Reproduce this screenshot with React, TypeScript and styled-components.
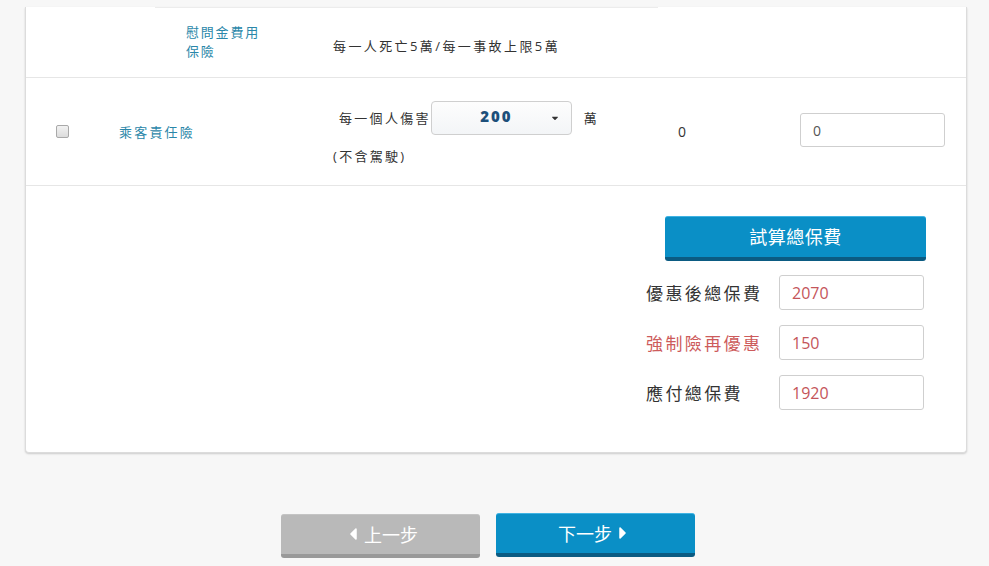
import styled, { createGlobalStyle } from "styled-components";
import { FaCaretLeft, FaCaretRight, FaCaretDown } from "react-icons/fa";

const GlobalStyle = createGlobalStyle`
  html, body {
    margin: 0;
    padding: 0;
    background: #f7f7f7;
    font-family: "Open Sans", "Noto Sans CJK TC", sans-serif;
    color: #333;
  }
`;

const Page = styled.div`
  width: 989px;
  height: 566px;
  overflow: hidden;
`;

const Card = styled.div`
  margin: 0 22px 0 25px;
  background: #fff;
  border: 1px solid #dcdcdc;
  border-top: none;
  border-radius: 0 0 4px 4px;
  box-shadow: 0 1px 2px rgba(0, 0, 0, 0.18);
`;

const SubTable = styled.div`
  margin: 7px 0 0 129px;
  width: 503px;
  border-top: 1px solid #ececec;
`;

const SubRow = styled.div`
  display: flex;
  align-items: center;
  height: 69px;
`;

const SubLabel = styled.div`
  width: 147px;
  padding-left: 31px;
  font-size: 13px;
  line-height: 19px;
  letter-spacing: 1.8px;
  color: #2b87a9;
  margin-top: -1px;

  span {
    display: block;
    width: 80px;
  }
`;

const SubValue = styled.div`
  font-size: 13px;
  letter-spacing: 2.4px;
  color: #333;
  margin-top: 6px;
`;

const MainRow = styled.div`
  display: grid;
  grid-template-columns: 93px 214px 345px 122px 145px 1fr;
  align-items: center;
  height: 107px;
  border-top: 1px solid #e6e6e6;
  border-bottom: 1px solid #e6e6e6;
`;

const CheckCell = styled.div`
  padding-left: 30px;
  display: flex;
  align-items: center;
`;

const Check = styled.span`
  display: inline-block;
  width: 11px;
  height: 11px;
  border: 1px solid #a9a9a9;
  border-radius: 2px;
  background: linear-gradient(#f2f2f2, #dcdcdc);
`;

const NameCell = styled.div`
  font-size: 13px;
  letter-spacing: 2.2px;
  color: #2b87a9;
`;

const CoverCell = styled.div`
  display: flex;
  flex-direction: column;
  gap: 11px;
  margin-top: 4px;
`;

const CoverLine = styled.div`
  display: flex;
  align-items: center;
  font-size: 13px;
  letter-spacing: 2.3px;
  color: #333;
`;

const CoverText = styled.span<{ $pad?: number }>`
  padding-left: ${(p) => p.$pad ?? 0}px;
  margin-top: ${(p) => (p.$pad ? -3 : 0)}px;
`;

const Select = styled.div`
  box-sizing: border-box;
  width: 141px;
  height: 34px;
  margin: 0 12px 0 0;
  border: 1px solid #cfcfcf;
  border-radius: 4px;
  background: linear-gradient(#fdfdfd, #f3f5f7);
  display: flex;
  align-items: center;
  position: relative;
  font-size: 15px;
  font-weight: 700;
  letter-spacing: 2px;
  color: #1d4f7a;
  margin-top: -2px;

  b {
    flex: 1;
    text-align: center;
    padding-right: 10px;
    margin-top: -3px;
  }

  svg {
    position: absolute;
    right: 11px;
    top: 11px;
    width: 10px;
    height: 10px;
    color: #333;
  }
`;

const Unit = styled.span`
  margin-top: -3px;
`;

const PremiumCell = styled.div`
  font-size: 14px;
  color: #333;
`;

const Field = styled.div<{ $tone?: "plain" | "red" }>`
  box-sizing: border-box;
  width: 145px;
  height: ${(p) => (p.$tone === "red" ? 35 : 34)}px;
  border: 1px solid #cfcfcf;
  border-radius: 3px;
  background: #fff;
  display: flex;
  align-items: center;
  padding-left: 12px;
  font-size: ${(p) => (p.$tone === "red" ? 16 : 14)}px;
  color: ${(p) => (p.$tone === "red" ? "#c4555a" : "#555")};
  margin-top: ${(p) => (p.$tone === "red" ? 0 : -3)}px;
`;

const Summary = styled.div`
  display: flex;
  flex-direction: column;
  align-items: flex-end;
  padding: 30px 40px 42px 0;
`;

const CalcButton = styled.button`
  width: 261px;
  height: 45px;
  margin-bottom: 14px;
  border: none;
  border-top: 1px solid #3fb3e3;
  border-bottom: 4px solid #0b5b82;
  border-radius: 3px;
  background: #0a8fc6;
  color: #fff;
  font-family: "Noto Sans CJK TC", sans-serif;
  font-size: 18px;
  letter-spacing: 0.5px;
  padding: 0 0 2px;
`;

const SumRow = styled.div`
  display: flex;
  align-items: center;
  margin-right: 2px;

  & + & {
    margin-top: 15px;
  }
`;

const SumLabel = styled.div<{ $red?: boolean }>`
  width: 133px;
  font-size: 17px;
  letter-spacing: 2.4px;
  color: ${(p) => (p.$red ? "#cd5b5b" : "#333")};
`;

const Nav = styled.div`
  display: flex;
  justify-content: center;
  gap: 16px;
  margin-top: 60px;
  padding-right: 13px;
`;

const StepButton = styled.button<{ $primary?: boolean }>`
  width: 199px;
  height: 44px;
  border: none;
  border-top: 1px solid ${(p) => (p.$primary ? "#3fb3e3" : "#c4c4c4")};
  border-bottom: 4px solid ${(p) => (p.$primary ? "#0b5b82" : "#999")};
  border-radius: 3px;
  background: ${(p) => (p.$primary ? "#0a8fc6" : "#b9b9b9")};
  color: #fff;
  font-family: "Noto Sans CJK TC", sans-serif;
  font-size: 18px;
  display: flex;
  align-items: center;
  justify-content: center;
  gap: 1px;
  padding: 0 0 2px;
  margin-top: ${(p) => (p.$primary ? 0 : 1)}px;

  svg {
    width: 20px;
    height: 20px;
  }
`;

export default function App() {
  return (
    <Page>
      <GlobalStyle />
      <Card>
        <SubTable>
          <SubRow>
            <SubLabel>
              <span>慰問金費用保險</span>
            </SubLabel>
            <SubValue>每一人死亡5萬/每一事故上限5萬</SubValue>
          </SubRow>
        </SubTable>
        <MainRow>
          <CheckCell>
            <Check />
          </CheckCell>
          <NameCell>乘客責任險</NameCell>
          <CoverCell>
            <CoverLine>
              <CoverText $pad={6}>每一個人傷害</CoverText>
              <Select>
                <b>200</b>
                <FaCaretDown />
              </Select>
              <Unit>萬</Unit>
            </CoverLine>
            <CoverLine>
              <CoverText>(不含駕駛)</CoverText>
            </CoverLine>
          </CoverCell>
          <PremiumCell>0</PremiumCell>
          <Field>0</Field>
        </MainRow>
        <Summary>
          <CalcButton>試算總保費</CalcButton>
          <SumRow>
            <SumLabel>優惠後總保費</SumLabel>
            <Field $tone="red">2070</Field>
          </SumRow>
          <SumRow>
            <SumLabel $red>強制險再優惠</SumLabel>
            <Field $tone="red">150</Field>
          </SumRow>
          <SumRow>
            <SumLabel>應付總保費</SumLabel>
            <Field $tone="red">1920</Field>
          </SumRow>
        </Summary>
      </Card>
      <Nav>
        <StepButton>
          <FaCaretLeft />
          上一步
        </StepButton>
        <StepButton $primary>
          下一步
          <FaCaretRight />
        </StepButton>
      </Nav>
    </Page>
  );
}
